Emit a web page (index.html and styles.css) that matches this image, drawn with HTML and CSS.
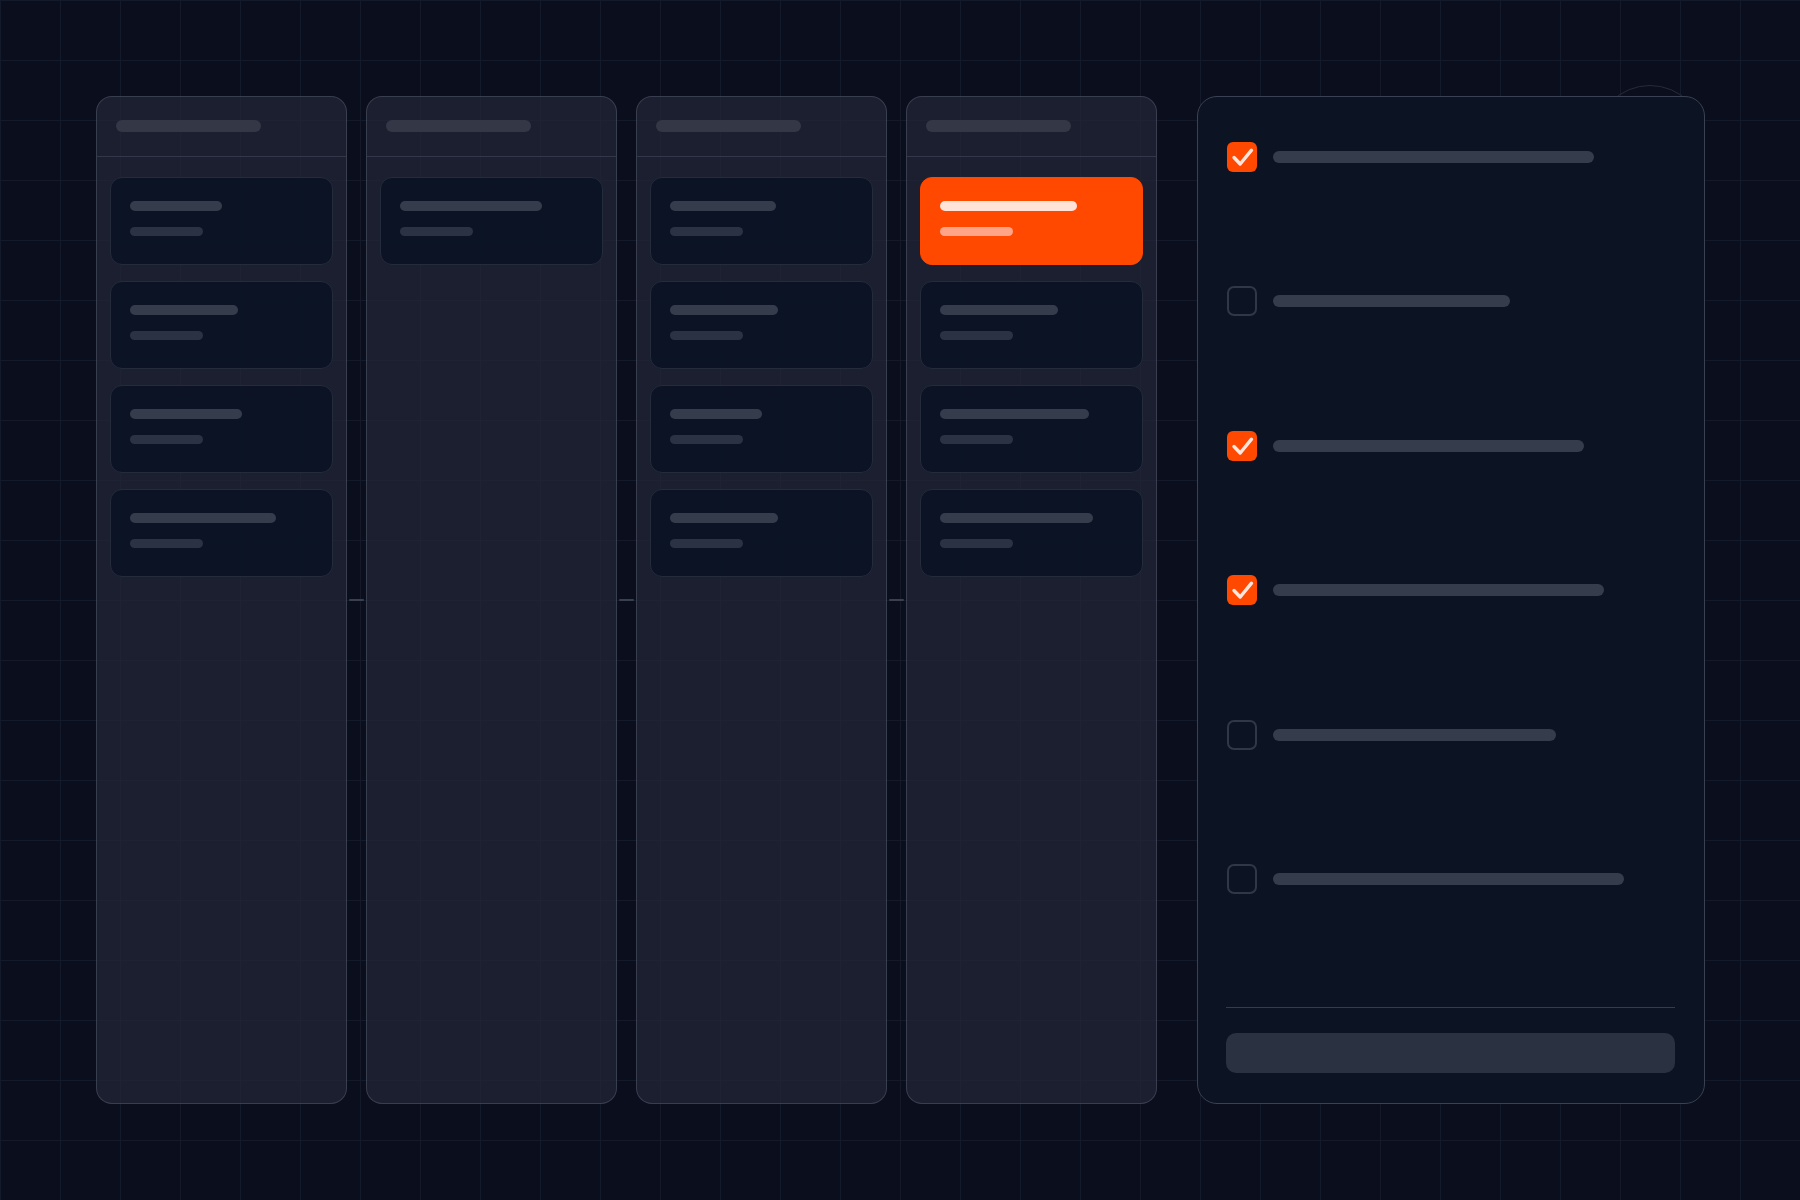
FILE: index.html
```html
<!DOCTYPE html>
<html lang="en">
<head>
<meta charset="utf-8">
<title>Board</title>
<link rel="stylesheet" href="styles.css">
</head>
<body>
<div class="page">
  <div class="halo"></div>
  <div class="board">
    <section class="column">
      <div class="col-head"><span class="head-bar"></span></div>
      <div class="cards">
        <div class="card"><span class="line1" style="width:92px"></span><span class="line2"></span></div>
        <div class="card"><span class="line1" style="width:108px"></span><span class="line2"></span></div>
        <div class="card"><span class="line1" style="width:112px"></span><span class="line2"></span></div>
        <div class="card"><span class="line1" style="width:146px"></span><span class="line2"></span></div>
      </div>
    </section>
    <div class="link"><span></span></div>
    <section class="column">
      <div class="col-head"><span class="head-bar"></span></div>
      <div class="cards">
        <div class="card"><span class="line1" style="width:142px"></span><span class="line2"></span></div>
      </div>
    </section>
    <div class="link"><span></span></div>
    <section class="column">
      <div class="col-head"><span class="head-bar"></span></div>
      <div class="cards">
        <div class="card"><span class="line1" style="width:106px"></span><span class="line2"></span></div>
        <div class="card"><span class="line1" style="width:108px"></span><span class="line2"></span></div>
        <div class="card"><span class="line1" style="width:92px"></span><span class="line2"></span></div>
        <div class="card"><span class="line1" style="width:108px"></span><span class="line2"></span></div>
      </div>
    </section>
    <div class="link"><span></span></div>
    <section class="column">
      <div class="col-head"><span class="head-bar"></span></div>
      <div class="cards">
        <div class="card card-active"><span class="line1" style="width:137px"></span><span class="line2"></span></div>
        <div class="card"><span class="line1" style="width:118px"></span><span class="line2"></span></div>
        <div class="card"><span class="line1" style="width:149px"></span><span class="line2"></span></div>
        <div class="card"><span class="line1" style="width:153px"></span><span class="line2"></span></div>
      </div>
    </section>

    <aside class="panel">
      <ul class="checklist">
        <li class="item"><span class="box checked"><svg viewBox="0 0 30 30" width="30" height="30"><path d="M7 15.5 L13.2 22 L24.5 8.2"/></svg></span><span class="item-bar" style="width:321px"></span></li>
        <li class="item"><span class="box"></span><span class="item-bar" style="width:237px"></span></li>
        <li class="item"><span class="box checked"><svg viewBox="0 0 30 30" width="30" height="30"><path d="M7 15.5 L13.2 22 L24.5 8.2"/></svg></span><span class="item-bar" style="width:311px"></span></li>
        <li class="item"><span class="box checked"><svg viewBox="0 0 30 30" width="30" height="30"><path d="M7 15.5 L13.2 22 L24.5 8.2"/></svg></span><span class="item-bar" style="width:331px"></span></li>
        <li class="item"><span class="box"></span><span class="item-bar" style="width:283px"></span></li>
        <li class="item"><span class="box"></span><span class="item-bar" style="width:351px"></span></li>
      </ul>
      <div class="divider"></div>
      <div class="button"></div>
    </aside>
  </div>
</div>
</body>
</html>
```

FILE: styles.css
```css
html, body {
  margin: 0;
  padding: 0;
}

body {
  width: 1800px;
  height: 1200px;
  overflow: hidden;
  background-color: #0a0e1d;
  background-image:
    linear-gradient(to right, #141a2a 1px, transparent 1px),
    linear-gradient(to bottom, #141a2a 1px, transparent 1px);
  background-size: 60px 60px;
  background-position: 0 0;
  font-family: "Inter", "Liberation Sans", sans-serif;
}

.page {
  position: relative;
  padding: 96px 0 0 96px;
}

.halo {
  position: absolute;
  left: 1595px;
  top: 85px;
  width: 108px;
  height: 108px;
  border-radius: 50%;
  border: 1.5px solid #262c3b;
}

.board {
  position: relative;
  display: flex;
  align-items: stretch;
  height: 1008px;
}

.column {
  width: 250.5px;
  box-sizing: border-box;
  border: 1.5px solid rgba(120, 128, 150, 0.32);
  border-radius: 16px;
  background: rgba(34, 37, 52, 0.76);
  display: flex;
  flex-direction: column;
}

.col-head {
  height: 60px;
  box-sizing: border-box;
  padding: 22.5px 0 0 18.5px;
  border-bottom: 1px solid rgba(120, 128, 150, 0.25);
}

.head-bar {
  display: block;
  width: 145px;
  height: 12px;
  border-radius: 6px;
  background: #333746;
}

.cards {
  padding: 20px 12.5px;
  display: flex;
  flex-direction: column;
  gap: 16px;
}

.card {
  height: 88px;
  box-sizing: border-box;
  border: 1px solid #242b3b;
  border-radius: 12px;
  background: rgba(11, 19, 36, 0.94);
  padding: 23px 19px 0;
  display: flex;
  flex-direction: column;
  gap: 15.5px;
}

.line1 {
  display: block;
  height: 10px;
  border-radius: 5px;
  background: #353d4d;
}

.line2 {
  display: block;
  width: 73px;
  height: 9px;
  border-radius: 4.5px;
  background: #2a3243;
}

.card-active {
  background: #ff4800;
  border-color: #ff4800;
}

.card-active .line1 {
  background: #ffe2d8;
}

.card-active .line2 {
  background: #ffa486;
}

.link {
  width: 19.5px;
  display: flex;
  align-items: center;
  justify-content: center;
}

.link span {
  display: block;
  width: 15px;
  height: 2px;
  border-radius: 1px;
  background: #3b4051;
}

.panel {
  margin-left: 40px;
  width: 508px;
  box-sizing: border-box;
  border: 1.5px solid #3a4152;
  border-radius: 20px;
  background: #0c1424;
  padding: 44.5px 28.5px 30px 28.5px;
  display: flex;
  flex-direction: column;
}

.checklist {
  list-style: none;
  margin: 0;
  padding: 0;
  display: flex;
  flex-direction: column;
  gap: 114.6px;
}

.item {
  display: flex;
  align-items: center;
  height: 30px;
  padding-left: 0.5px;
}

.box {
  width: 30px;
  height: 30px;
  box-sizing: border-box;
  border: 2px solid #303848;
  border-radius: 7px;
  flex: none;
  display: block;
}

.box.checked {
  border: none;
  background: #ff4800;
  border-radius: 6px;
}

.box svg {
  display: block;
}

.box svg path {
  fill: none;
  stroke: #ffe6dd;
  stroke-width: 3.4;
  stroke-linecap: round;
  stroke-linejoin: round;
}

.item-bar {
  display: block;
  margin-left: 16px;
  height: 12px;
  border-radius: 6px;
  background: #353d4c;
}

.divider {
  margin-top: auto;
  height: 1.5px;
  background: #343c4d;
}

.button {
  margin-top: 25px;
  height: 40px;
  border-radius: 10px;
  background: #2a3140;
}
```
